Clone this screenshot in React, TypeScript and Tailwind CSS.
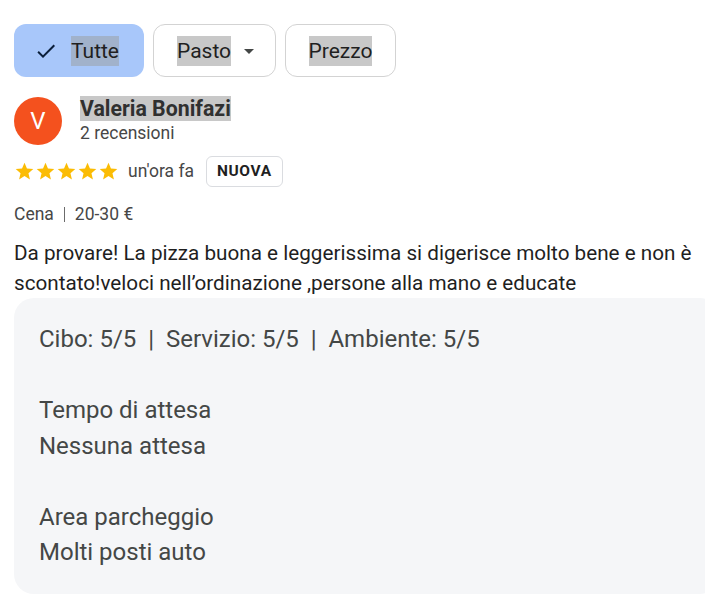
import React from 'react';

const Star = () => (
  <svg viewBox="0 0 24 24" className="w-[21px] h-[21px]" fill="#fbbc04">
    <path d="M12 17.27 18.18 21l-1.64-7.03L22 9.24l-7.19-.61L12 2 9.19 8.63 2 9.24l5.46 4.73L5.82 21z" />
  </svg>
);

export default function App() {
  return (
    <div className="w-[705px] h-[599px] overflow-hidden bg-white text-[#1f1f1f]" style={{ fontFamily: 'Roboto, "Noto Sans", sans-serif' }}>
      <div className="w-[720px] pl-[14px] pt-[24px]">
        {/* Filtri */}
        <div className="flex gap-[9px]">
          <button className="h-[53px] w-[130px] flex items-center pl-[20px] rounded-[12px] bg-[#a8c7fa] text-[21px] text-[#1f1f1f]">
            <svg viewBox="0 0 24 24" className="w-[24px] h-[24px] mr-[13px]" fill="#0b1f3a">
              <path d="M9 16.17 4.83 12l-1.42 1.41L9 19 21 7l-1.41-1.41z" />
            </svg>
            <span className="bg-[#a1b2cb] leading-[30px]">Tutte</span>
          </button>
          <button className="h-[53px] w-[123px] flex items-center pl-[23px] rounded-[12px] border border-[#d3d3d3] text-[21px] text-[#1f1f1f]">
            <span className="bg-[#c8c8c8] leading-[30px]">Pasto</span>
            <svg viewBox="0 0 24 24" className="w-[24px] h-[24px] ml-[6px]" fill="#444746">
              <path d="M7 10l5 5 5-5z" />
            </svg>
          </button>
          <button className="h-[53px] w-[111px] flex items-center justify-center rounded-[12px] border border-[#d3d3d3] text-[21px] text-[#1f1f1f]">
            <span className="bg-[#c8c8c8] leading-[30px]">Prezzo</span>
          </button>
        </div>

        {/* Autore */}
        <div className="flex items-start mt-[20px]">
          <div className="w-[48px] h-[48px] rounded-full bg-[#f4511e] flex items-center justify-center text-white text-[24px]">
            V
          </div>
          <div className="ml-[18px] mt-[0px]">
            <div className="text-[21.3px] font-bold leading-[24px]">
              <span className="bg-[#c8c8c8] text-[#303030]">Valeria Bonifazi</span>
            </div>
            <div className="text-[17.5px] leading-[24px] text-[#474747]">2 recensioni</div>
          </div>
        </div>

        {/* Valutazione */}
        <div className="flex items-center mt-[11px] h-[31px]">
          <div className="flex">
            <Star />
            <Star />
            <Star />
            <Star />
            <Star />
          </div>
          <span className="ml-[9px] text-[17.5px] text-[#474747]">un'ora fa</span>
          <span className="ml-[12px] h-[31px] px-[10px] flex items-center rounded-[6px] border border-[#dadce0] text-[15.5px] font-bold tracking-[0.6px] text-[#1f1f1f]">
            NUOVA
          </span>
        </div>

        <div className="mt-[13px] flex items-center text-[17.5px] text-[#474747] leading-[28px]">
          <span>Cena</span>
          <span className="mx-[10px] w-px h-[15px] bg-[#6b6b6b]" />
          <span>20-30 €</span>
        </div>

        <p className="mt-[10px] text-[20.7px] leading-[30px] text-[#1f1f1f] pr-[10px]">
          Da provare! La pizza buona e leggerissima si digerisce molto bene e non è scontato!veloci nell’ordinazione ,persone alla mano e educate
        </p>

        <div className="mt-[0px] rounded-[20px] bg-[#f5f6f8] pl-[25px] pt-[24px] pb-[23px] text-[24px] leading-[35.5px] text-[#444746]">
          <div>Cibo: 5/5 &nbsp;|&nbsp; Servizio: 5/5 &nbsp;|&nbsp; Ambiente: 5/5</div>
          <div>&nbsp;</div>
          <div>Tempo di attesa</div>
          <div>Nessuna attesa</div>
          <div>&nbsp;</div>
          <div>Area parcheggio</div>
          <div>Molti posti auto</div>
        </div>
      </div>
    </div>
  );
}
